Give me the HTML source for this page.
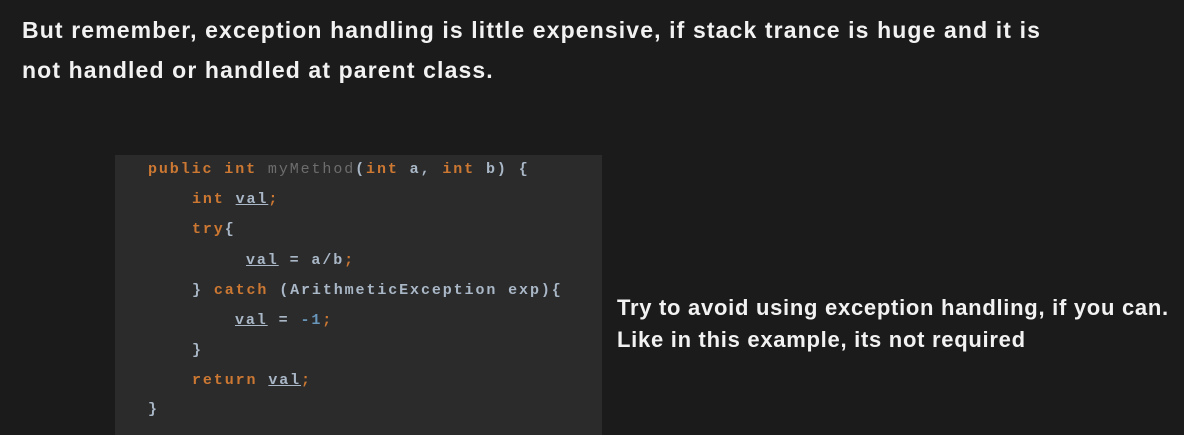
<!DOCTYPE html>
<html><head><style>
html,body{margin:0;padding:0;}
body{width:1184px;height:428px;background:#1b1b1b;position:relative;overflow:hidden;font-family:"Liberation Sans",sans-serif;}
.h{position:absolute;left:22px;color:#f2f2f2;font-weight:bold;font-size:23px;letter-spacing:1.12px;white-space:nowrap;line-height:26px;}
.code{position:absolute;left:115px;top:155px;width:487px;height:280px;background:#2b2b2c;}
.l{position:absolute;font-family:"Liberation Mono",monospace;font-size:15px;letter-spacing:1.9px;color:#a9b7c6;white-space:nowrap;font-weight:bold;}
.k{color:#cc7832;}
.m{color:#6d6d6d;font-weight:normal;}
.n{color:#6897bb;}
.u{text-decoration:underline;}
.r{position:absolute;left:617px;color:#f2f2f2;font-weight:bold;font-size:22px;white-space:nowrap;letter-spacing:0.72px;line-height:24px;}
</style></head><body>
<div class="h" style="top:17px">But remember, exception handling is little expensive, if stack trance is huge and it is</div>
<div class="h" style="top:57px">not handled or handled at parent class.</div>
<div class="code"></div>
<div class="l" style="left:148px;top:161px"><span class="k">public int</span> <span class="m">myMethod</span>(<span class="k">int</span> a, <span class="k">int</span> b) {</div>
<div class="l" style="left:192px;top:191px"><span class="k">int</span> <span class="u">val</span><span class="k">;</span></div>
<div class="l" style="left:192px;top:221px"><span class="k">try</span>{</div>
<div class="l" style="left:246px;top:252px"><span class="u">val</span> = a/b<span class="k">;</span></div>
<div class="l" style="left:192px;top:282px">} <span class="k">catch</span> (ArithmeticException exp){</div>
<div class="l" style="left:235px;top:312px"><span class="u">val</span> = <span class="n">-1</span><span class="k">;</span></div>
<div class="l" style="left:192px;top:342px">}</div>
<div class="l" style="left:192px;top:372px"><span class="k">return</span> <span class="u">val</span><span class="k">;</span></div>
<div class="l" style="left:148px;top:401px">}</div>
<div class="r" style="top:296px">Try to avoid using exception handling, if you can.</div>
<div class="r" style="top:328px">Like in this example, its not required</div>
</body></html>
